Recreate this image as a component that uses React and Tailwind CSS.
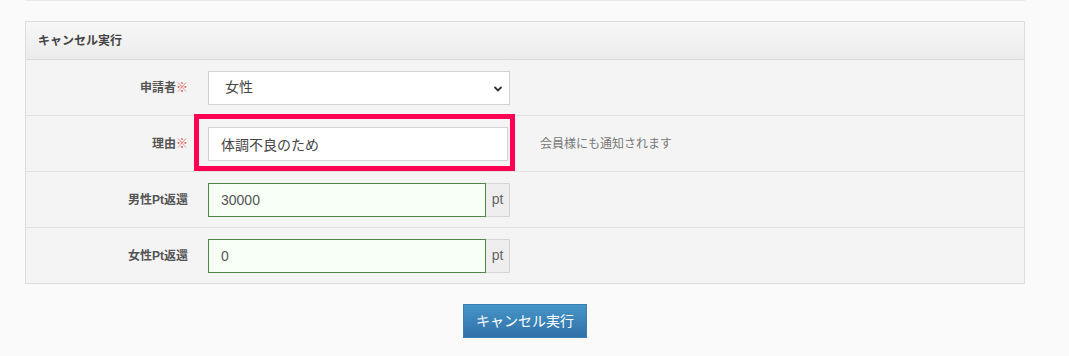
export default function App() {
  const font = { fontFamily: '"Liberation Sans", "Noto Sans CJK JP", sans-serif' };
  const Label = ({ children, req }) => (
    <div className="w-[170px] shrink-0 text-right pr-[8px] text-[12px] font-bold text-[#555]">
      {children}
      {req && <span className="text-[#d9534f] font-normal">※</span>}
    </div>
  );
  const PtRow = ({ label, value }) => (
    <div className="flex items-center h-[56px] border-t border-[#e3e3e3]">
      <Label>{label}</Label>
      <div className="pl-[12px] flex">
        <input
          readOnly
          value={value}
          className="w-[278px] h-[34px] border border-[#4d8a43] bg-[#f8fff6] pl-[12px] text-[14px] text-[#555] outline-none"
          style={font}
        />
        <div className="w-[24px] h-[34px] border border-l-0 border-[#d6d6d6] bg-[#eeeeee] flex items-center justify-center text-[14px] text-[#666]">
          pt
        </div>
      </div>
    </div>
  );
  return (
    <div className="min-h-[356px] bg-[#fafafa] text-[#333]" style={font}>
      <div className="ml-[25px] w-[1000px]">
        <div className="h-px bg-[#e8e8e8]" />
        <div className="mt-[20px] border border-[#dedede] bg-[#f4f4f4]">
          <div className="h-[37px] flex items-center pl-[12px] bg-gradient-to-b from-[#f7f7f7] to-[#ececec] text-[12px] font-bold text-[#444]">
            キャンセル実行
          </div>
          <div className="flex items-center h-[56px] border-t border-[#d9d9d9]">
            <Label req>申請者</Label>
            <div className="pl-[12px]">
              <div className="relative w-[302px] h-[34px] border border-[#d2d2d2] bg-white flex items-center pl-[16px] text-[14px] text-[#444]">
                女性
                <svg className="absolute right-[6px] top-[13px]" width="10" height="8" viewBox="0 0 10 8">
                  <path d="M1.5 2 L5 5.5 L8.5 2" fill="none" stroke="#333" strokeWidth="1.8" />
                </svg>
              </div>
            </div>
          </div>
          <div className="flex items-center h-[56px] border-t border-[#e3e3e3]">
            <Label req>理由</Label>
            <div className="pl-[12px] relative">
              <input
                readOnly
                value="体調不良のため"
                className="w-[300px] h-[34px] border border-[#d2d2d2] bg-white pl-[12px] text-[14px] text-[#444] outline-none"
                style={font}
              />
              <div className="absolute left-[-2px] top-[-13px] w-[321px] h-[57px] border-[5px] border-[#ff0052] pointer-events-none" />
            </div>
            <div className="ml-[32px] text-[12px] text-[#777]">会員様にも通知されます</div>
          </div>
          <PtRow label="男性Pt返還" value="30000" />
          <PtRow label="女性Pt返還" value="0" />
        </div>
        <div className="flex justify-center mt-[20px]">
          <button className="w-[124px] h-[34px] bg-gradient-to-b from-[#4596c8] to-[#3270a8] border border-[#3a7fb3] text-white text-[14px]">
            キャンセル実行
          </button>
        </div>
      </div>
    </div>
  );
}
